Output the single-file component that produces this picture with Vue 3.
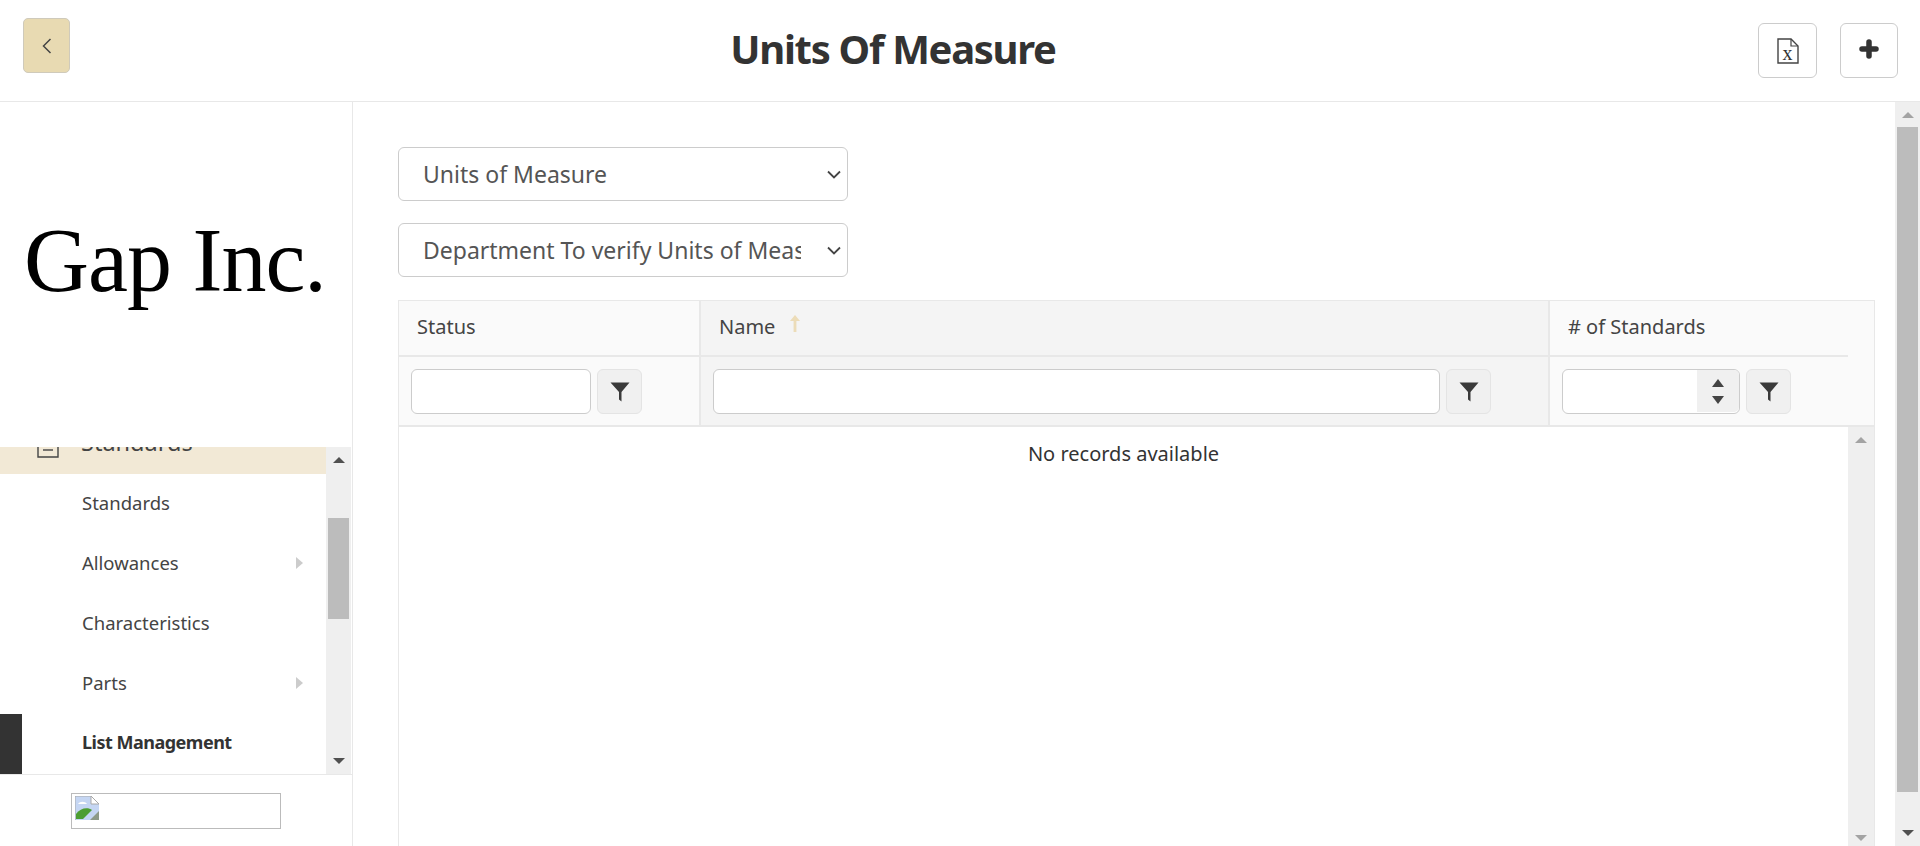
<script setup>
import { ref } from "vue";

const listType = ref("uom");
const department = ref("verify");

const pickers = [
  { model: listType, value: "uom", label: "Units of Measure" },
  { model: department, value: "verify", label: "Department To verify Units of Measure" },
];

const menuItems = [
  { label: "Standards" },
  { label: "Allowances", arrow: true },
  { label: "Characteristics" },
  { label: "Parts", arrow: true },
  { label: "List Management", active: true },
];

const columns = [
  { key: "status", label: "Status" },
  { key: "name", label: "Name", sorted: true },
  { key: "count", label: "# of Standards", numeric: true },
];
</script>

<template>
  <div class="page">
    <header class="topbar">
      <div class="topbar-left">
        <button class="back-btn" aria-label="Back">
          <svg width="10" height="16" viewBox="0 0 10 16">
            <path d="M8.500 1 1.500 8l7 7" fill="none" stroke="#444" stroke-width="1.5" />
          </svg>
        </button>
      </div>
      <h1 class="title">Units Of Measure</h1>
      <div class="topbar-actions">
        <button class="action-btn excel" aria-label="Export">
          <svg width="22" height="26" viewBox="0 0 22 26">
            <path d="M1 1h13l7 7v17H1z" fill="none" stroke="#444" stroke-width="1.4" />
            <path d="M14 1v7h7" fill="none" stroke="#444" stroke-width="1.2" />
            <text x="10.500" y="21.500" text-anchor="middle" class="excel-x">x</text>
          </svg>
        </button>
        <button class="action-btn plus" aria-label="Add">
          <svg width="20" height="20" viewBox="0 0 20 20">
            <path d="M10 3v14M3 10h14" stroke="#333" stroke-width="5.500" stroke-linecap="round" />
          </svg>
        </button>
      </div>
    </header>

    <div class="body">
      <aside class="sidebar">
        <div class="logo">Gap Inc.</div>

        <div class="menu-wrap">
          <nav class="menu">
            <div class="menu-parent">
              <svg class="parent-icon" width="22" height="28" viewBox="0 0 22 28">
                <path d="M1 1h20v26H1z" fill="none" stroke="#444" stroke-width="1.400" />
                <path d="M6 20h10" stroke="#444" stroke-width="1.400" />
              </svg>
              <span class="parent-label">Standards</span>
              <i class="parent-caret"></i>
            </div>
            <a
              v-for="item in menuItems"
              :key="item.label"
              class="menu-item"
              :class="{ active: item.active }"
            >
              {{ item.label }}
              <i v-if="item.arrow" class="menu-arrow"></i>
            </a>
          </nav>
          <div class="scrollbar side-scroll">
            <i class="arrow up dark"></i>
            <div class="track"><div class="thumb"></div></div>
            <i class="arrow down dark"></i>
          </div>
        </div>

        <div class="sidebar-foot">
          <div class="broken-img">
            <svg width="24" height="24" viewBox="0 0 24 24">
              <path d="M0 0h16l8 8v16H0z" fill="#c5d6f3" />
              <path d="M16 0v8h8z" fill="#fff" stroke="#a8a8a8" />
              <path d="M3 8c2-3 7-3 9 0z" fill="#fff" />
              <path d="M1 23v-5c4-6 12-7 16-4l-9 9z" fill="#4d9e32" />
              <path d="M24 15 15 24h9z" fill="#8d9a88" />
              <path d="M0 24V0h16" fill="none" stroke="#a8a8a8" />
            </svg>
          </div>
        </div>
      </aside>

      <main class="content">
        <div class="selects">
          <div v-for="p in pickers" :key="p.value" class="picker-wrap">
            <select v-model="p.model.value" class="picker">
              <option :value="p.value">{{ p.label }}</option>
            </select>
            <svg class="picker-caret" width="14" height="9" viewBox="0 0 14 9">
              <path d="M1 1.500 7 7.500l6-6" fill="none" stroke="#444" stroke-width="1.800" />
            </svg>
          </div>
        </div>

        <section class="grid">
          <div class="grid-head">
            <div
              v-for="col in columns"
              :key="col.key"
              class="head-cell"
              :class="{ sorted: col.sorted }"
            >
              <span>{{ col.label }}</span>
              <svg v-if="col.sorted" class="sort-icon" width="12" height="20" viewBox="0 0 12 20">
                <path d="M6 1 1 7h3.600v11h2.800V7H11z" fill="#ecdcb8" />
              </svg>
            </div>
            <div
              v-for="col in columns"
              :key="col.key + '-filter'"
              class="filter-cell"
              :class="{ sorted: col.sorted }"
            >
              <div class="filter-input">
                <input type="text" />
                <div v-if="col.numeric" class="spinner">
                  <i class="spin-up"></i>
                  <i class="spin-down"></i>
                </div>
              </div>
              <button class="filter-btn" aria-label="Filter">
                <svg width="20" height="20" viewBox="0 0 20 20">
                  <path d="M0.500 0.500h19L11.500 10v9.500L9 17.500V10z" fill="#3a3a3a" />
                </svg>
              </button>
            </div>
          </div>

          <div class="grid-body">
            <div class="no-records">No records available</div>
            <div class="scrollbar body-scroll">
              <i class="arrow up"></i>
              <div class="track"></div>
              <i class="arrow down"></i>
            </div>
          </div>
        </section>
      </main>

      <div class="scrollbar page-scroll">
        <i class="arrow up"></i>
        <div class="track"><div class="thumb"></div></div>
        <i class="arrow down dark"></i>
      </div>
    </div>
  </div>
</template>

<style scoped>
.page {
  display: flex;
  flex-direction: column;
  height: 846px;
  overflow: hidden;
  background: #fff;
  color: #333;
  font-family: "Noto Sans", "Open Sans", sans-serif;
}

.topbar {
  display: grid;
  grid-template-columns: 1fr auto 1fr;
  align-items: flex-start;
  flex: 0 0 102px;
  box-sizing: border-box;
  border-bottom: 1px solid #e8e8e8;
}

.topbar-left {
  padding: 18px 0 0 23px;
}

.back-btn {
  display: flex;
  align-items: center;
  justify-content: center;
  width: 47px;
  height: 55px;
  padding: 0;
  background: #e8dab2;
  border: 1px solid #cfcabb;
  border-radius: 5px;
}

.title {
  margin: 0 0 0 -134px;
  font-size: 40px;
  font-weight: 700;
  letter-spacing: -1.300px;
  line-height: 98px;
  color: #333;
}

.topbar-actions {
  display: flex;
  justify-content: flex-end;
  gap: 23px;
  padding: 23px 22px 0 0;
}

.action-btn {
  display: flex;
  align-items: center;
  justify-content: center;
  height: 55px;
  padding: 0;
  background: #fff;
  border: 1px solid #ccc;
  border-radius: 6px;
}

.excel {
  width: 59px;
}

.plus {
  width: 58px;
}

.plus svg {
  margin-top: -3px;
}

.excel-x {
  font-family: "Liberation Serif", serif;
  font-size: 20px;
  fill: #333;
}

.body {
  display: flex;
  flex: 1;
  min-height: 0;
}

.sidebar {
  display: flex;
  flex-direction: column;
  flex: 0 0 353px;
  box-sizing: border-box;
  border-right: 1px solid #e8e8e8;
}

.logo {
  flex: 0 0 345px;
  padding: 0 0 28px 24px;
  box-sizing: border-box;
  display: flex;
  align-items: center;
  font-family: "Liberation Serif", serif;
  font-size: 90px;
  letter-spacing: -1px;
  color: #000;
  white-space: nowrap;
}

.menu-wrap {
  display: flex;
  flex: 0 0 327px;
  min-height: 0;
}

.menu {
  display: flex;
  flex-direction: column;
  justify-content: flex-end;
  flex: 1;
  min-width: 0;
  overflow: hidden;
}

.menu-parent {
  display: flex;
  flex: 0 0 60px;
  align-items: center;
  box-sizing: border-box;
  padding: 0 29px 0 37px;
  background: #f2e9d6;
  font-size: 23.500px;
  font-weight: 400;
  color: #444;
}

.parent-icon {
  margin-right: 22px;
}

.parent-label {
  flex: 1;
  margin-top: -4px;
}

.parent-caret {
  width: 0;
  height: 0;
  margin-top: -8px;
  border-top: 4px solid #bbb;
  border-left: 4px solid transparent;
  border-right: 4px solid transparent;
}

.menu-item {
  display: flex;
  flex: 0 0 60px;
  align-items: center;
  justify-content: space-between;
  box-sizing: border-box;
  padding: 0 23px 4px 82px;
  font-size: 18.500px;
  color: #444;
}

.menu-item.active {
  padding-left: 60px;
  border-left: 22px solid #333;
  font-size: 18px;
  font-weight: 700;
  letter-spacing: -0.500px;
  color: #333;
}

.menu-arrow {
  width: 0;
  height: 0;
  margin-top: 2px;
  border-left: 7px solid #ccc;
  border-top: 6px solid transparent;
  border-bottom: 6px solid transparent;
}

.scrollbar {
  display: flex;
  flex-direction: column;
  align-items: center;
  box-sizing: border-box;
  background: #efefef;
}

.scrollbar .track {
  flex: 1;
  width: 100%;
  box-sizing: border-box;
  padding: 0 2px;
}

.scrollbar .thumb {
  background: #bcbcbc;
}

.arrow {
  flex: 0 0 auto;
  width: 0;
  height: 0;
  border-left: 6px solid transparent;
  border-right: 6px solid transparent;
}

.arrow.up {
  margin: 10px 0 9px;
  border-bottom: 6px solid #a3a3a3;
}

.arrow.down {
  margin: 9px 0 10px;
  border-top: 6px solid #a3a3a3;
}

.arrow.up.dark {
  border-bottom-color: #505050;
}

.arrow.down.dark {
  border-top-color: #505050;
}

.side-scroll {
  flex: 0 0 25px;
  margin-right: 1px;
}

.side-scroll .track {
  padding-top: 46px;
}

.side-scroll .thumb {
  height: 101px;
}

.sidebar-foot {
  display: flex;
  flex: 1;
  justify-content: center;
  padding-top: 18px;
  border-top: 1px solid #e8e8e8;
}

.broken-img {
  box-sizing: border-box;
  width: 210px;
  height: 36px;
  padding: 2px 3px;
  border: 1px solid #bbb;
}

.broken-img svg {
  display: block;
}

.content {
  display: flex;
  flex-direction: column;
  flex: 1;
  min-width: 0;
  padding: 45px 20px 0 45px;
}

.selects {
  display: flex;
  flex-direction: column;
  gap: 22px;
  margin-bottom: 23px;
}

.picker-wrap {
  position: relative;
  width: 450px;
  height: 54px;
}

.picker {
  display: block;
  appearance: none;
  box-sizing: border-box;
  width: 100%;
  height: 100%;
  padding: 0 46px 0 24px;
  background: #fff;
  border: 1px solid #ccc;
  border-radius: 6px;
  font-family: inherit;
  font-size: 23px;
  color: #555;
}

.picker-caret {
  position: absolute;
  top: 23px;
  right: 7px;
  pointer-events: none;
}

.grid {
  display: flex;
  flex-direction: column;
  flex: 1;
  min-height: 0;
  border-left: 1px solid #e8e8e8;
  border-right: 1px solid #e8e8e8;
}

.grid-head {
  display: grid;
  grid-template-columns: 302px 849px 1fr;
  grid-template-rows: 56px 68px;
  border-top: 1px solid #e8e8e8;
  border-bottom: 2px solid #e8e8e8;
}

.head-cell {
  display: flex;
  align-items: center;
  gap: 14px;
  padding: 0 0 3px 18px;
  background: #fafafa;
  border-bottom: 2px solid #e8e8e8;
  border-right: 2px solid #e8e8e8;
  font-size: 20px;
  color: #444;
}

.head-cell:nth-child(3) {
  border-right: 0;
  border-bottom: 0;
  background-image: linear-gradient(#e8e8e8, #e8e8e8);
  background-repeat: no-repeat;
  background-size: calc(100% - 26px) 2px;
  background-position: left bottom;
  padding-bottom: 5px;
}

.head-cell.sorted {
  background: #f4f4f4;
}

.sort-icon {
  margin-top: -6px;
}

.filter-cell {
  display: flex;
  align-items: flex-start;
  gap: 6px;
  box-sizing: border-box;
  padding: 12px 12px 0;
  background: #fafafa;
  border-right: 2px solid #e8e8e8;
}

.filter-cell:nth-child(6) {
  border-right: 0;
  padding-right: 83px;
}

.filter-cell:nth-child(5) {
  background: #f4f4f4;
  padding-right: 57px;
}

.filter-cell:nth-child(4) {
  padding-right: 57px;
}

.filter-input {
  position: relative;
  flex: 1;
  min-width: 0;
}

.filter-input input {
  display: block;
  box-sizing: border-box;
  width: 100%;
  height: 45px;
  background: #fff;
  border: 1px solid #ccc;
  border-radius: 6px;
  outline: none;
}

.spinner {
  position: absolute;
  top: 1px;
  right: 1px;
  bottom: 2px;
  display: flex;
  flex-direction: column;
  align-items: center;
  justify-content: center;
  gap: 9px;
  width: 42px;
  background: #f0f0f0;
  border-radius: 0 5px 5px 0;
}

.spin-up,
.spin-down {
  width: 0;
  height: 0;
  border-left: 6px solid transparent;
  border-right: 6px solid transparent;
}

.spin-up {
  border-bottom: 8px solid #444;
}

.spin-down {
  border-top: 8px solid #444;
}

.filter-btn {
  display: flex;
  align-items: center;
  justify-content: center;
  flex: 0 0 45px;
  height: 45px;
  padding: 0;
  background: #f0f0f0;
  border: 1px solid #e4e4e4;
  border-radius: 6px;
}

.grid-body {
  display: flex;
  flex: 1;
  min-height: 0;
}

.no-records {
  flex: 1;
  padding-top: 15px;
  font-size: 20px;
  line-height: 24px;
  text-align: center;
  color: #333;
}

.body-scroll {
  flex: 0 0 26px;
}

.page-scroll {
  flex: 0 0 25px;
}

.page-scroll .thumb {
  height: 665px;
}

.body-scroll .arrow.down {
  margin-bottom: 5px;
}
</style>
